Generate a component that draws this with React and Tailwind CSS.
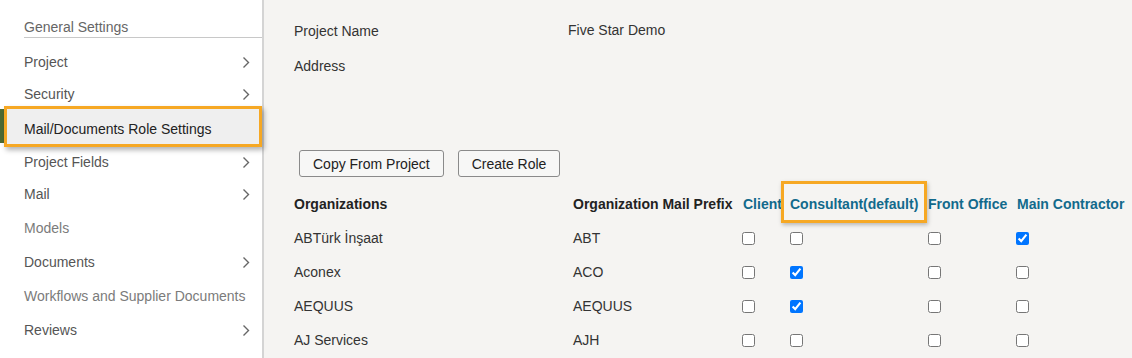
import React from "react";

const Chevron = () => (
  <svg width="8" height="13" viewBox="0 0 8 13" className="shrink-0">
    <polyline points="1.5,1.5 6.5,6.5 1.5,11.5" fill="none" stroke="#666" strokeWidth="1.4" />
  </svg>
);

const items = [
  { label: "Project", h: "h-[34px]", chev: true },
  { label: "Security", h: "h-[30px]", chev: true },
  { label: "Mail/Documents Role Settings", h: "h-[38px]", active: true },
  { label: "Project Fields", h: "h-[30px]", chev: true },
  { label: "Mail", h: "h-[34px]", chev: true },
  { label: "Models", h: "h-[34px]", dim: true },
  { label: "Documents", h: "h-[34px]", chev: true },
  { label: "Workflows and Supplier Documents", h: "h-[34px]", dim: true },
  { label: "Reviews", h: "h-[34px]", chev: true },
  { label: "Tools", h: "h-[34px]", chev: true },
];

const rows = [
  { org: "ABTürk İnşaat", prefix: "ABT", c: [false, false, false, true] },
  { org: "Aconex", prefix: "ACO", c: [false, true, false, false] },
  { org: "AEQUUS", prefix: "AEQUUS", c: [false, true, false, false] },
  { org: "AJ Services", prefix: "AJH", c: [false, false, false, false] },
];

const Box = ({ checked }) => (
  <input
    type="checkbox"
    defaultChecked={checked}
    className="m-0 h-[13px] w-[13px] accent-[#0075ff]"
  />
);

export default function App() {
  return (
    <div className="flex h-[358px] w-[1132px] overflow-hidden bg-[#f5f4f2] font-['Liberation_Sans',Arial,sans-serif] text-[14px] leading-[16px]">
      <aside className="relative w-[264px] shrink-0 border-r-2 border-[#d4d4d4] bg-white">
        <div className="ml-[24px] mt-[19px] border-b border-[#c8c8c8] pb-[2px] text-[#666]">
          General Settings
        </div>
        <div className="mt-[7px]">
          {items.map((it) => (
            <div key={it.label} className={`relative flex items-center ${it.h} pl-[24px] pr-[12px]`}>
              {it.active && (
                <>
                  <div className="absolute left-0 top-0 h-[34px] w-[4px] bg-[#4d6a33]" />
                  <div className="absolute left-[4px] right-0 -top-[3px] bottom-0 border-[3px] border-[#f6a824] bg-[#efefef] shadow-[2px_3px_5px_rgba(0,0,0,0.3)]" />
                </>
              )}
              <span
                className={`relative flex-1 whitespace-nowrap ${
                  it.active ? "text-[#222] pt-[1px]" : it.dim ? "text-[#7b7b7b]" : "text-[#555]"
                }`}
              >
                {it.label}
              </span>
              {it.chev && <Chevron />}
            </div>
          ))}
        </div>
      </aside>

      <main className="flex-1 pl-[30px] text-[#333]">
        <div className="grid grid-cols-[274px_1fr] pt-[23px]">
          <div className="h-[16px]">Project Name</div>
          <div className="-mt-[1px]">Five Star Demo</div>
          <div className="mt-[19px]">Address</div>
          <div />
        </div>

        <div className="ml-[5px] mt-[76px] flex gap-[14px]">
          <button className="h-[27px] rounded-[3px] border border-[#8a8a8a] bg-[#f7f7f6] px-[13px] text-[#222]">
            Copy From Project
          </button>
          <button className="h-[27px] rounded-[3px] border border-[#8a8a8a] bg-[#f7f7f6] px-[13px] text-[#222]">
            Create Role
          </button>
        </div>

        <div className="mt-[10px] grid grid-cols-[279px_169px_48px_138px_88px_1fr]">
          <div className="flex h-[34px] items-center font-bold text-[#222] whitespace-nowrap">Organizations</div>
          <div className="flex h-[34px] items-center font-bold text-[#222] whitespace-nowrap">Organization Mail Prefix</div>
          <div className="flex h-[34px] items-center pl-[1px] font-bold text-[#126a8c] whitespace-nowrap">Client</div>
          <div className="relative flex h-[34px] items-center font-bold text-[#126a8c] whitespace-nowrap">
            <div className="absolute -left-[9px] -top-[6px] -bottom-[2px] right-[1px] border-[3px] border-[#f6a824] shadow-[1px_2px_4px_rgba(0,0,0,0.25)]" />
            <span className="relative">Consultant(default)</span>
          </div>
          <div className="flex h-[34px] items-center font-bold text-[#126a8c] whitespace-nowrap">Front Office</div>
          <div className="flex h-[34px] items-center pl-[1px] font-bold text-[#126a8c] whitespace-nowrap">Main Contractor</div>

          {rows.map((r) => (
            <React.Fragment key={r.org}>
              <div className="flex h-[34px] items-center">{r.org}</div>
              <div className="flex h-[34px] items-center">{r.prefix}</div>
              {r.c.map((v, i) => (
                <div key={i} className="flex h-[34px] items-center">
                  <Box checked={v} />
                </div>
              ))}
            </React.Fragment>
          ))}
        </div>
      </main>
    </div>
  );
}
